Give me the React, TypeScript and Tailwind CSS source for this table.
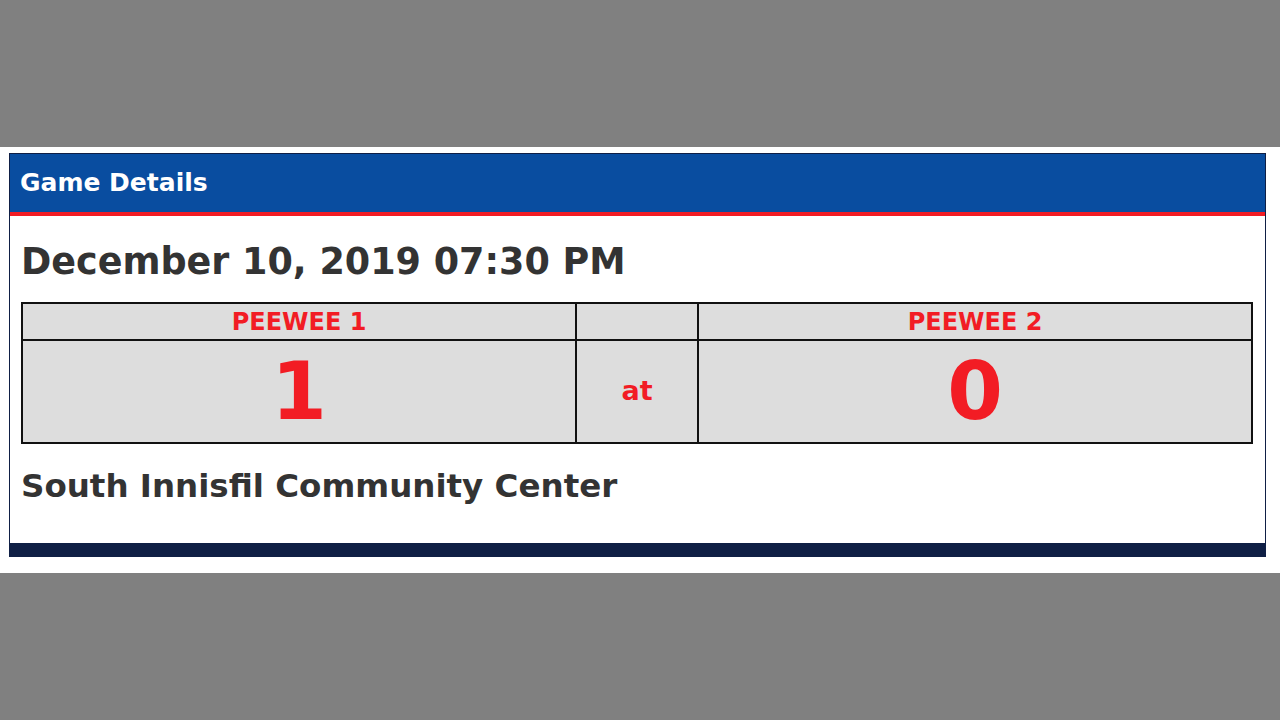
export default function App() {
  return (
    <div className="w-[1280px] h-[720px] bg-[#808080] flex flex-col font-['DejaVu_Sans',Verdana,sans-serif]">
      <div className="h-[147px]" />
      <div className="bg-white pt-[6px] pb-[16px] pl-[9px] pr-[14px]">
        <div className="border border-[#0f1f45] bg-white">
          {/* header */}
          <div className="h-[62px] bg-[#094da0] border-b-[4px] border-[#f21c24] flex items-center px-[10px]">
            <span className="text-white font-bold text-[25px]">Game Details</span>
          </div>

          <div className="px-[11px] pt-[24px]">
            <div className="text-[#333] font-bold text-[36.5px] leading-[44px]">December 10, 2019 07:30 PM</div>

            <table className="mt-[18px] w-[1232px] border-collapse bg-[#dddddd] text-[#f21c24] font-bold text-center">
              <tbody>
                <tr className="h-[37px]">
                  <td className="w-[554px] border-2 border-[#111] text-[24px] leading-none">PEEWEE 1</td>
                  <td className="w-[122px] border-2 border-[#111]" />
                  <td className="border-2 border-[#111] text-[24px] leading-none">PEEWEE 2</td>
                </tr>
                <tr className="h-[103px]">
                  <td className="border-2 border-[#111] text-[80px] leading-none">1</td>
                  <td className="border-2 border-[#111] text-[27px]">at</td>
                  <td className="border-2 border-[#111] text-[80px] leading-none">0</td>
                </tr>
              </tbody>
            </table>

            <div className="text-[#333] font-bold text-[32.5px] leading-[44px] mt-[20px] pb-[35px]">
              South Innisfil Community Center
            </div>
          </div>

          <div className="h-[13px] bg-[#0f1f45]" />
        </div>
      </div>
    </div>
  );
}
